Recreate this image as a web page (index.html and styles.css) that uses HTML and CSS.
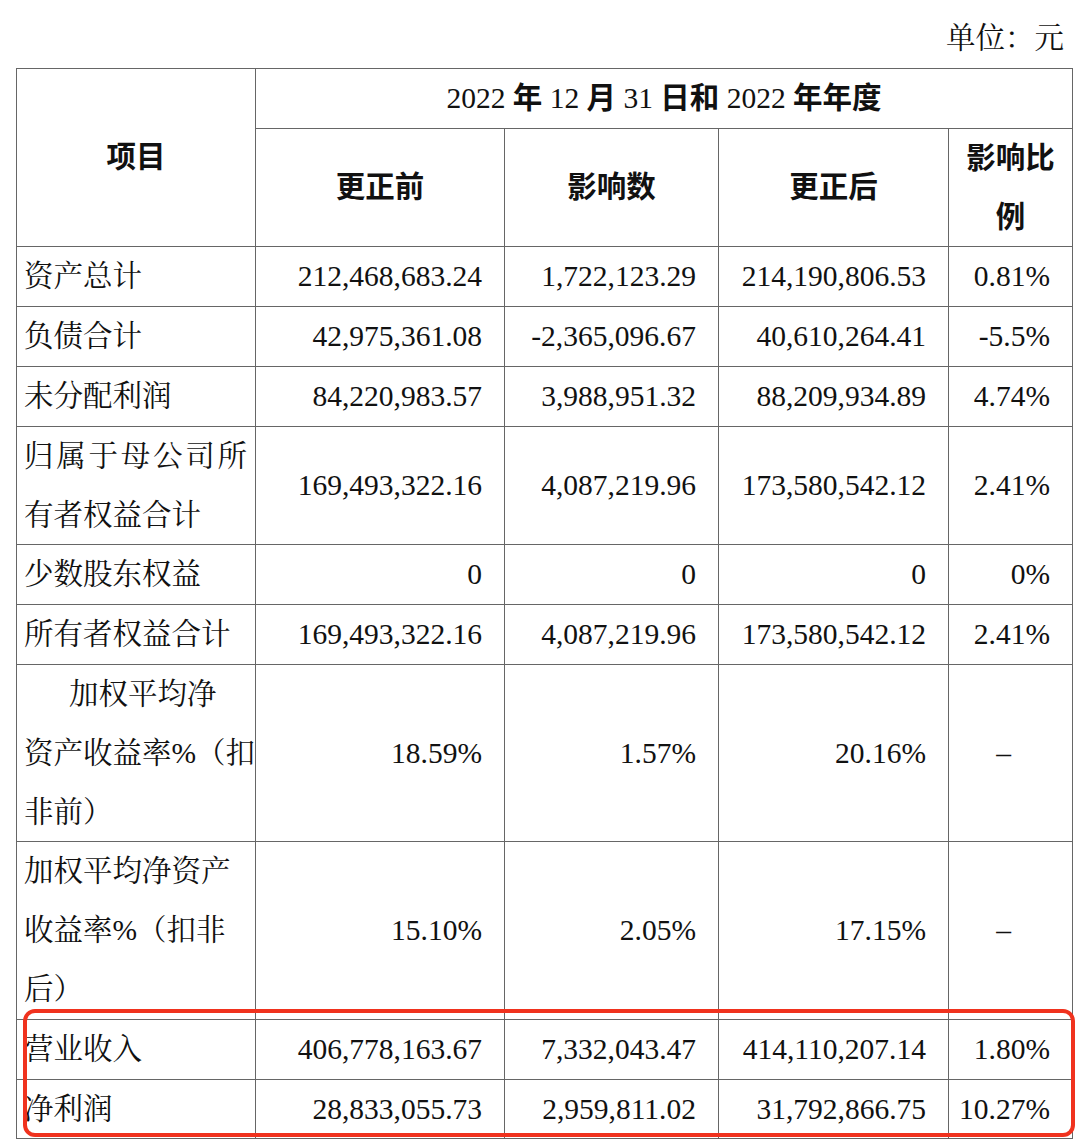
FILE: index.html
```html
<!DOCTYPE html>
<html lang="zh-CN">
<head>
<meta charset="utf-8">
<title>更正前后对比</title>
<link rel="stylesheet" href="styles.css">
</head>
<body>
<div class="page">
  <div class="unit">单位：元</div>
  <div class="table-wrap">
    <table class="report">
      <colgroup>
        <col class="c-item">
        <col class="c-before">
        <col class="c-impact">
        <col class="c-after">
        <col class="c-ratio">
      </colgroup>
      <thead>
        <tr>
          <th rowspan="2" class="h-item">项目</th>
          <th colspan="4" class="h-period"><span class="num">2022</span> 年 <span class="num">12</span> 月 <span class="num">31</span> 日和 <span class="num">2022</span> 年年度</th>
        </tr>
        <tr>
          <th>更正前</th>
          <th>影响数</th>
          <th>更正后</th>
          <th>影响比例</th>
        </tr>
      </thead>
      <tbody>
        <tr><td class="label">资产总计</td><td class="val">212,468,683.24</td><td class="val">1,722,123.29</td><td class="val">214,190,806.53</td><td class="val">0.81%</td></tr>
        <tr><td class="label">负债合计</td><td class="val">42,975,361.08</td><td class="val">-2,365,096.67</td><td class="val">40,610,264.41</td><td class="val">-5.5%</td></tr>
        <tr><td class="label">未分配利润</td><td class="val">84,220,983.57</td><td class="val">3,988,951.32</td><td class="val">88,209,934.89</td><td class="val">4.74%</td></tr>
        <tr><td class="label">归属于母公司所有者权益合计</td><td class="val">169,493,322.16</td><td class="val">4,087,219.96</td><td class="val">173,580,542.12</td><td class="val">2.41%</td></tr>
        <tr><td class="label">少数股东权益</td><td class="val">0</td><td class="val">0</td><td class="val">0</td><td class="val">0%</td></tr>
        <tr><td class="label">所有者权益合计</td><td class="val">169,493,322.16</td><td class="val">4,087,219.96</td><td class="val">173,580,542.12</td><td class="val">2.41%</td></tr>
        <tr><td class="label fixed indent">加权平均净<br>资产收益率%（扣<br>非前）</td><td class="val">18.59%</td><td class="val">1.57%</td><td class="val">20.16%</td><td class="val dash">–</td></tr>
        <tr><td class="label fixed">加权平均净资产<br>收益率%（扣非<br>后）</td><td class="val">15.10%</td><td class="val">2.05%</td><td class="val">17.15%</td><td class="val dash">–</td></tr>
        <tr><td class="label">营业收入</td><td class="val">406,778,163.67</td><td class="val">7,332,043.47</td><td class="val">414,110,207.14</td><td class="val">1.80%</td></tr>
        <tr><td class="label">净利润</td><td class="val">28,833,055.73</td><td class="val">2,959,811.02</td><td class="val">31,792,866.75</td><td class="val">10.27%</td></tr>
      </tbody>
    </table>
    <div class="highlight"></div>
  </div>
</div>
</body>
</html>
```

FILE: styles.css
```css
html, body {
  margin: 0;
  padding: 0;
  background: #ffffff;
}

body {
  color: #111111;
  font-family: "Liberation Serif", "Noto Serif CJK SC", "Noto Sans CJK SC", serif;
  font-size: 29.5px;
}

.page {
  width: 1056px;
  padding: 8px 0 0 16px;
}

.unit {
  text-align: right;
  line-height: 60px;
  padding-right: 8px;
}

.table-wrap {
  position: relative;
}

.report {
  width: 1056px;
  border-collapse: collapse;
  table-layout: fixed;
}

.c-item { width: 239px; }
.c-before { width: 249px; }
.c-impact { width: 214px; }
.c-after { width: 230px; }
.c-ratio { width: 124px; }

.report th,
.report td {
  border: 1px solid #666666;
  line-height: 58.8px;
  padding: 0 8px;
  vertical-align: middle;
}

.report th {
  font-family: "Liberation Serif", "Noto Sans CJK SC", sans-serif;
  font-weight: 700;
  text-align: center;
  color: #111111;
}

.report th .num {
  font-weight: 400;
}

.report td.label {
  text-align: justify;
  padding: 0 8px 0 7px;
}

.report td.fixed {
  white-space: nowrap;
}

.report td.indent {
  text-indent: 45px;
}

.report td.val {
  text-align: right;
  padding: 0 22px 0 8px;
}

.report td.dash {
  text-align: center;
}

.highlight {
  position: absolute;
  left: 7px;
  right: -3px;
  bottom: 2px;
  height: 128px;
  box-sizing: border-box;
  border: 4px solid #f0321e;
  border-radius: 12px;
  pointer-events: none;
}
```
